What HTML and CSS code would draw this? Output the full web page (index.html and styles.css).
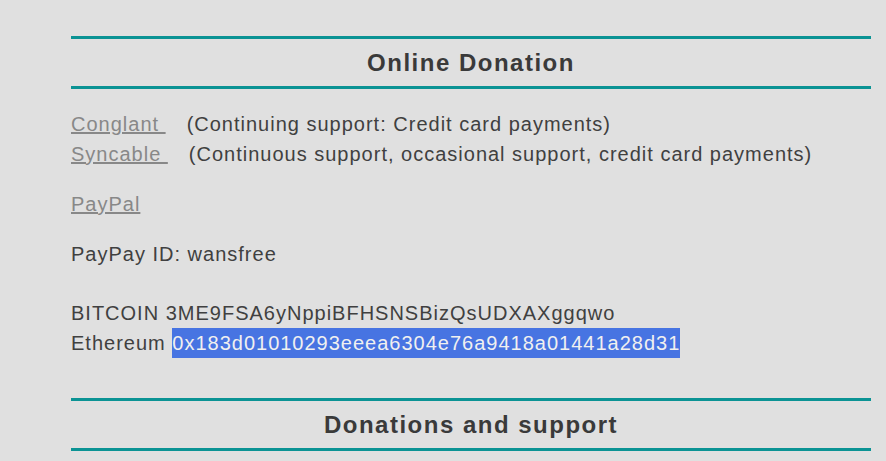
FILE: index.html
```html
<!DOCTYPE html>
<html>
<head>
<meta charset="utf-8">
<link rel="stylesheet" href="styles.css">
</head>
<body>
<div class="wrap">
  <h2 class="section-title">Online Donation</h2>
  <div class="block">
    <p class="line"><a href="#" class="lnk">Conglant </a><span class="desc">(Continuing support: Credit card payments)</span></p>
    <p class="line"><a href="#" class="lnk">Syncable </a><span class="desc">(Continuous support, occasional support, credit card payments)</span></p>
  </div>
  <div class="block">
    <p class="line"><a href="#" class="lnk">PayPal</a></p>
  </div>
  <div class="block">
    <p class="line">PayPay ID: wansfree</p>
  </div>
  <div class="block crypto">
    <p class="line">BITCOIN 3ME9FSA6yNppiBFHSNSBizQsUDXAXggqwo</p>
    <p class="line">Ethereum <span class="sel">0x183d01010293eeea6304e76a9418a01441a28d31</span></p>
  </div>
  <h2 class="section-title second">Donations and support</h2>
</div>
</body>
</html>
```
FILE: styles.css
```css
html, body {
  margin: 0;
  padding: 0;
  background: #e0e0e0;
}
body {
  font-family: "Liberation Sans", Arial, sans-serif;
  color: #404040;
}
.wrap {
  width: 800px;
  margin-left: 71px;
  padding-top: 36px;
}
.section-title {
  margin: 0;
  border-top: 3px solid #0b9394;
  border-bottom: 3px solid #0b9394;
  height: 47px;
  line-height: 48px;
  text-align: center;
  font-size: 24px;
  font-weight: bold;
  letter-spacing: 1.5px;
  color: #3a3a3a;
}
.section-title.second {
  margin-top: 40px;
}
.block {
  margin-top: 20px;
}
.block.crypto {
  margin-top: 29px;
}
.line {
  margin: 0;
  font-size: 20px;
  line-height: 30px;
  letter-spacing: 1px;
  white-space: nowrap;
}
.lnk {
  color: #888888;
  text-decoration: underline;
}
.desc {
  margin-left: 21px;
}
.sel {
  display: inline-block;
  vertical-align: top;
  line-height: 30px;
  background: #4774e2;
  color: #f0f0f0;
}
```
